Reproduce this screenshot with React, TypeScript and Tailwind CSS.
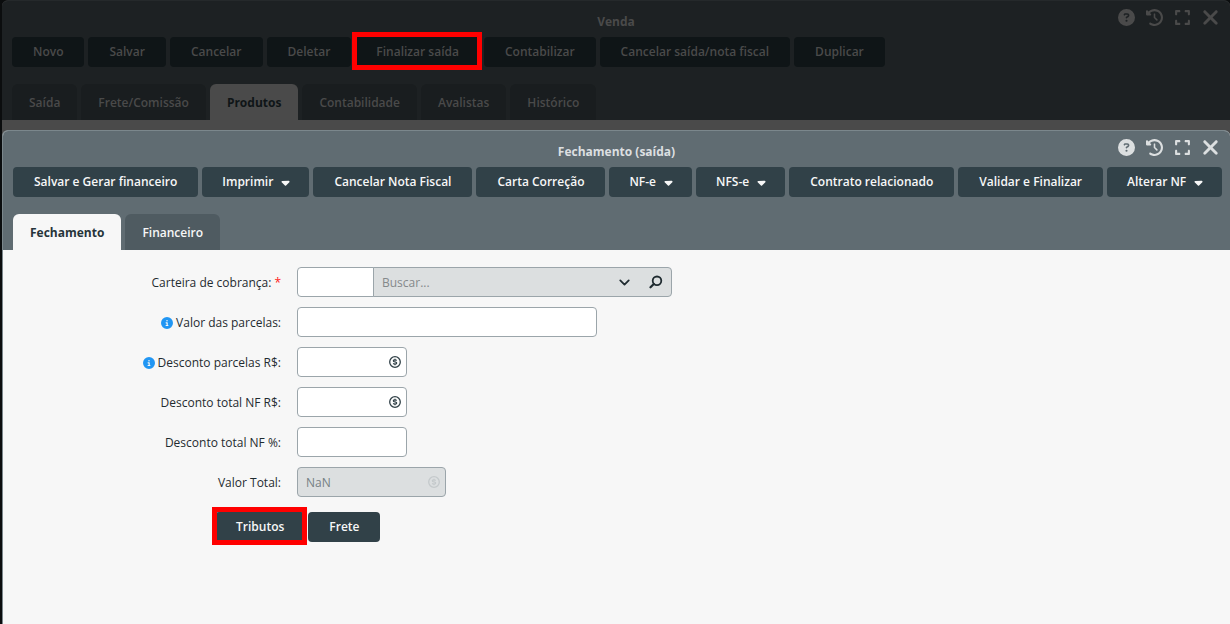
import type { ReactNode } from "react";
import clsx from "clsx";
import { ChevronDown } from "lucide-react";
import { FaCaretDown, FaCircleInfo, FaCircleQuestion, FaClockRotateLeft, FaExpand, FaXmark } from "react-icons/fa6";

interface Action {
  label: string;
  menu?: boolean;
  marked?: boolean;
}

const saleActions: Action[] = [
  { label: "Novo" },
  { label: "Salvar" },
  { label: "Cancelar" },
  { label: "Deletar" },
  { label: "Finalizar saída", marked: true },
  { label: "Contabilizar" },
  { label: "Cancelar saída/nota fiscal" },
  { label: "Duplicar" },
];

const closingActions: Action[] = [
  { label: "Salvar e Gerar financeiro" },
  { label: "Imprimir", menu: true },
  { label: "Cancelar Nota Fiscal" },
  { label: "Carta Correção" },
  { label: "NF-e", menu: true },
  { label: "NFS-e", menu: true },
  { label: "Contrato relacionado" },
  { label: "Validar e Finalizar" },
  { label: "Alterar NF", menu: true },
];

const saleTabs = ["Saída", "Frete/Comissão", "Produtos", "Contabilidade", "Avalistas", "Histórico"];
const closingTabs = ["Fechamento", "Financeiro"];

const inputCls = "h-[30px] rounded border border-[#9ba5aa] bg-white px-2 outline-none";

const SearchIcon = () => (
  <svg width="14" height="14" viewBox="0 0 14 14" fill="none" stroke="currentColor" strokeWidth="1.8" strokeLinecap="round">
    <circle cx="8" cy="5.8" r="4.3" />
    <path d="M4.8 9 1.5 12.3" strokeWidth="2.2" />
  </svg>
);

const MoneyIcon = ({ className }: { className?: string }) => (
  <svg width="12" height="12" viewBox="0 0 24 24" fill="none" stroke="currentColor" strokeWidth="2.6" className={className}>
    <circle cx="12" cy="12" r="10.6" />
    <path d="M15.2 9.2c-.5-1-1.7-1.5-3.2-1.5-1.900 0-3.200.8-3.200 2.100 0 3 6.600 1.300 6.600 4.400 0 1.300-1.400 2.100-3.300 2.100-1.700 0-3-.6-3.500-1.700M12 5.600v2.200M12 16.200v2.200" />
  </svg>
);

const ActionButton = ({ label, menu, marked, dim }: Action & { dim?: boolean }) => (
  <button
    type="button"
    className={clsx(
      "relative flex h-[30px] shrink-0 items-center rounded font-semibold whitespace-nowrap",
      dim ? "bg-[#0f1517] text-[#4a4a4a]" : "bg-[#314148] text-[#f7f7f7]",
      menu ? "gap-1.5 pr-[17px] pl-5" : "px-[21px]",
    )}
  >
    {label}
    {menu && <FaCaretDown size={13} />}
    {marked && <span className="absolute -top-[5px] -right-0.5 -bottom-[3px] -left-[3px] z-10 border-5 border-[#ff0000]" />}
  </button>
);

interface HeaderProps {
  title: string;
  actions: Action[];
  tabs: string[];
  active: string;
  dim?: boolean;
}

const WindowHeader = ({ title, actions, tabs, active, dim }: HeaderProps) => (
  <header className={clsx("px-2.5", dim ? "bg-[#1d2123] text-[#4a4a4a]" : "bg-[#606c72] text-[#dcdfe0]")}>
    <div className="relative h-9 pt-[13px]">
      <h2 className="text-center font-bold leading-4">{title}</h2>
      <div className="absolute top-[5px] -right-0.5 flex items-center gap-[11px]">
        <button type="button" aria-label="Ajuda"><FaCircleQuestion size={17} /></button>
        <button type="button" aria-label="Histórico"><FaClockRotateLeft size={17} /></button>
        <button type="button" aria-label="Expandir"><FaExpand size={17} /></button>
        <button type="button" aria-label="Fechar" className="-ml-[3px]"><FaXmark size={23} /></button>
      </div>
    </div>
    <div className="flex gap-1">
      {actions.map((a) => <ActionButton key={a.label} {...a} dim={dim} />)}
    </div>
    <div role="tablist" className="mt-[17px] flex gap-1">
      {tabs.map((t) => (
        <button
          key={t}
          type="button"
          role="tab"
          aria-selected={t === active}
          className={clsx(
            "h-9 rounded-t-md px-[17px] pt-0.5",
            t === active ? "font-bold" : "font-semibold",
            dim && (t === active ? "bg-[#4a4a4a] text-[#0f1517]" : "bg-[#191d1f] text-[#4a4a4a]"),
            !dim && (t === active ? "bg-[#f7f7f7] text-[#26343a]" : "bg-[#4f5b61] text-[#f7f7f7]"),
          )}
        >
          {t}
        </button>
      ))}
    </div>
  </header>
);

interface FieldProps {
  id: string;
  label: string;
  info?: boolean;
  required?: boolean;
  children: ReactNode;
}

const Field = ({ id, label, info, required, children }: FieldProps) => (
  <div className="flex items-center gap-4">
    <label htmlFor={id} className="flex w-[278px] items-center justify-end gap-[3px] pt-0.5">
      {info && <FaCircleInfo size={12} className="text-[#2196f3]" />}
      {label}
      {required && <span className="text-[#ff2020]">*</span>}
    </label>
    {children}
  </div>
);

const MoneyInput = ({ id }: { id: string }) => (
  <div className="relative">
    <input id={id} className={clsx(inputCls, "w-[110px] pr-7")} />
    <MoneyIcon className="absolute top-[9px] right-1.5 text-[#314148]" />
  </div>
);

export default function App() {
  return (
    <div className="flex min-h-screen flex-col bg-[#0b0d0e] pl-0.5 font-['Open_Sans',sans-serif] text-[12px] leading-4">
      <div className="overflow-hidden rounded-t-md border-t border-[#25292b] bg-[#4a4a4a] pb-2.5">
        <WindowHeader title="Venda" actions={saleActions} tabs={saleTabs} active="Produtos" dim />
      </div>

      <div className="flex grow flex-col bg-[#4a4a4a]">
        <section className="flex grow flex-col overflow-hidden rounded-t-md border-t border-l border-[#7b878c] bg-[#f7f7f7]">
          <WindowHeader title="Fechamento (saída)" actions={closingActions} tabs={closingTabs} active="Fechamento" />

          <form className="flex flex-col gap-2.5 pt-[17px] text-[#1f2b30]">
            <Field id="carteira" label="Carteira de cobrança:" required>
              <div className="flex">
                <input id="carteira" className={clsx(inputCls, "w-[77px] rounded-r-none")} />
                <div className="-ml-px flex h-[30px] w-[299px] items-center rounded-r border border-[#9ba5aa] bg-[#dcdfe0]">
                  <input
                    aria-label="Buscar carteira"
                    placeholder="Buscar..."
                    className="min-w-0 grow bg-transparent px-2 pt-0.5 outline-none placeholder:text-[#85898b]"
                  />
                  <button type="button" aria-label="Abrir lista" className="px-2"><ChevronDown size={17} strokeWidth={2.5} /></button>
                  <button type="button" aria-label="Pesquisar" className="px-2"><SearchIcon /></button>
                </div>
              </div>
            </Field>
            <Field id="parcelas" label="Valor das parcelas:" info>
              <input id="parcelas" className={clsx(inputCls, "w-[300px]")} />
            </Field>
            <Field id="desconto-parcelas" label="Desconto parcelas R$:" info>
              <MoneyInput id="desconto-parcelas" />
            </Field>
            <Field id="desconto-nf" label="Desconto total NF R$:">
              <MoneyInput id="desconto-nf" />
            </Field>
            <Field id="desconto-pct" label="Desconto total NF %:">
              <input id="desconto-pct" className={clsx(inputCls, "w-[110px]")} />
            </Field>
            <Field id="total" label="Valor Total:">
              <div className="relative">
                <input
                  id="total"
                  disabled
                  defaultValue="NaN"
                  className="h-[30px] w-[149px] rounded border border-[#9ba5aa] bg-[#dcdfe0] px-2 text-[#758084]"
                />
                <MoneyIcon className="absolute top-[9px] right-1.5 text-[#c4c9cb]" />
              </div>
            </Field>
            <div className="mt-[5px] flex gap-[3px] pl-[212px]">
              <ActionButton label="Tributos" marked />
              <ActionButton label="Frete" />
            </div>
          </form>
        </section>
      </div>
    </div>
  );
}
